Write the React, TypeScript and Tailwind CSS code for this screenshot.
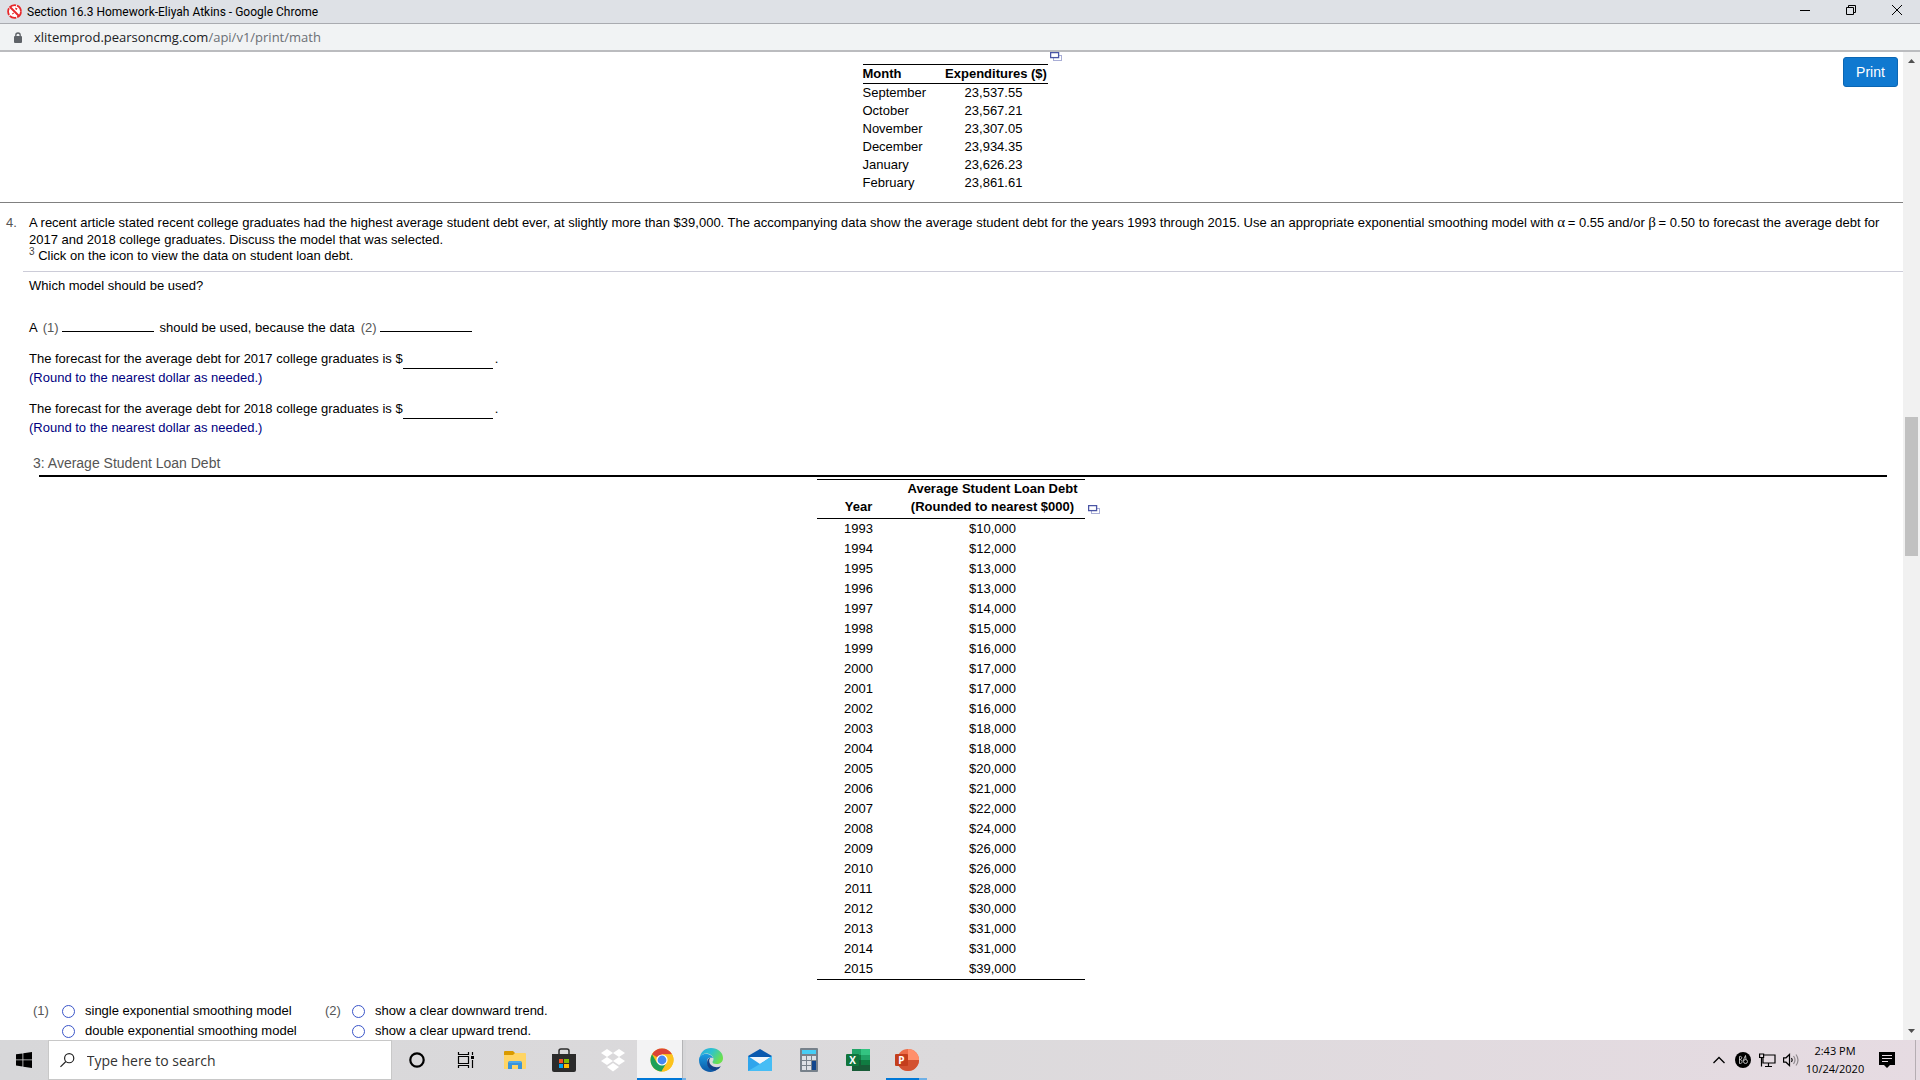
import React from 'react';

const expenditures = [
  { month: 'September', amount: '23,537.55' },
  { month: 'October', amount: '23,567.21' },
  { month: 'November', amount: '23,307.05' },
  { month: 'December', amount: '23,934.35' },
  { month: 'January', amount: '23,626.23' },
  { month: 'February', amount: '23,861.61' },
];

const loanDebt = [
  { year: 1993, debt: '$10,000' },
  { year: 1994, debt: '$12,000' },
  { year: 1995, debt: '$13,000' },
  { year: 1996, debt: '$13,000' },
  { year: 1997, debt: '$14,000' },
  { year: 1998, debt: '$15,000' },
  { year: 1999, debt: '$16,000' },
  { year: 2000, debt: '$17,000' },
  { year: 2001, debt: '$17,000' },
  { year: 2002, debt: '$16,000' },
  { year: 2003, debt: '$18,000' },
  { year: 2004, debt: '$18,000' },
  { year: 2005, debt: '$20,000' },
  { year: 2006, debt: '$21,000' },
  { year: 2007, debt: '$22,000' },
  { year: 2008, debt: '$24,000' },
  { year: 2009, debt: '$26,000' },
  { year: 2010, debt: '$26,000' },
  { year: 2011, debt: '$28,000' },
  { year: 2012, debt: '$30,000' },
  { year: 2013, debt: '$31,000' },
  { year: 2014, debt: '$31,000' },
  { year: 2015, debt: '$39,000' },
];

const PopupIcon = () => (
  <svg width="12" height="10" viewBox="0 0 12 10" fill="none">
    <rect x="3.5" y="3.5" width="8" height="5" stroke="#a9aed6" />
    <rect x="0.6" y="0.6" width="8" height="5" fill="#fff" stroke="#4a55a5" strokeWidth="1.3" />
  </svg>
);

const TitleBar = () => (
  <header className="flex h-6 shrink-0 items-center border-b border-[#a9abb0] bg-[#dee1e6] pl-[7px] font-['Roboto',sans-serif] text-[12px] text-black">
    <svg width="15" height="15" viewBox="0 0 15 15" fill="none">
      <circle cx="7.5" cy="7.5" r="6.4" fill="#fff" stroke="#e8282b" strokeWidth="1.8" strokeDasharray="7 1" />
      <path d="M3 3l9 9" stroke="#e8282b" strokeWidth="2" />
      <path d="M5 10l2-1M8 4l2 1M9 6l1-2" stroke="#e8282b" />
    </svg>
    <h1 className="ml-[5px] flex-1">Section 16.3 Homework-Eliyah Atkins - Google Chrome</h1>
    <div className="flex h-full items-center pb-[3px]">
      <button aria-label="Minimize" className="flex w-[46px] justify-center">
        <svg width="10" height="10" viewBox="0 0 10 10"><path d="M0 5.5h10" stroke="#000" /></svg>
      </button>
      <button aria-label="Restore" className="flex w-[46px] justify-center">
        <svg width="10" height="10" viewBox="0 0 10 10" fill="none" stroke="#000">
          <path d="M0.5 2.5h7v7h-7zM2.5 2.5v-2h7v7h-2" />
        </svg>
      </button>
      <button aria-label="Close" className="flex w-[46px] justify-center">
        <svg width="10" height="10" viewBox="0 0 10 10"><path d="M0 0l10 10M10 0L0 10" stroke="#000" /></svg>
      </button>
    </div>
  </header>
);

const AddressBar = () => (
  <div className="flex h-7 shrink-0 items-center border-b-2 border-[#bbbcbf] bg-[#f1f3f4] pt-px pl-[14px] font-['Open_Sans',sans-serif] text-[13px] text-[#202124]">
    <svg width="8" height="12" viewBox="0 0 8 12">
      <path d="M1.8 5V3.2a2.2 2.2 0 0 1 4.4 0V5" fill="none" stroke="#5f6368" strokeWidth="1.3" />
      <rect y="4" width="8" height="7" rx="1" fill="#5f6368" />
    </svg>
    <p className="ml-3">
      xlitemprod.pearsoncmg.com<span className="text-[#6b6f74]">/api/v1/print/math</span>
    </p>
  </div>
);

const ExpendituresTable = () => (
  <div className="flex justify-center gap-[2px] pl-[21px]">
    <table className="mt-3 w-[185px] border-collapse leading-[18px]">
      <thead>
        <tr className="border-y border-black">
          <th className="p-0 text-left">Month</th>
          <th className="w-[103px] p-0 text-center whitespace-nowrap">Expenditures ($)</th>
        </tr>
      </thead>
      <tbody>
        {expenditures.map(row => (
          <tr key={row.month}>
            <td className="p-0">{row.month}</td>
            <td className="p-0 pr-[5px] text-center">{row.amount}</td>
          </tr>
        ))}
      </tbody>
    </table>
    <button aria-label="Copy table data" className="self-start"><PopupIcon /></button>
  </div>
);

interface ForecastProps {
  year: number;
}

const Forecast: React.FC<ForecastProps> = ({ year }) => (
  <div className="mb-3 leading-[19px]">
    <div className="flex">
      <label htmlFor={`forecast-${year}`}>
        The forecast for the average debt for {year} college graduates is $
      </label>
      <input
        id={`forecast-${year}`}
        className="h-5 w-[90px] border-b border-black outline-none"
      />
      <span className="ml-[2px]">.</span>
    </div>
    <p className="-mt-px text-[#000080]">(Round to the nearest dollar as needed.)</p>
  </div>
);

const LoanDebtTable = () => (
  <div className="flex justify-center gap-[3px] pr-[10px]">
    <table className="mt-[2px] w-[268px] border-collapse border-y border-black text-center leading-5">
      <thead className="border-b border-black leading-[18px]">
        <tr>
          <th className="w-[84px] p-0 pb-[2px] align-bottom">Year</th>
          <th className="p-0 pb-[2px] whitespace-nowrap">
            Average Student Loan Debt
            <br />
            (Rounded to nearest $000)
          </th>
        </tr>
      </thead>
      <tbody>
        {loanDebt.map(row => (
          <tr key={row.year}>
            <td className="p-0">{row.year}</td>
            <td className="p-0">{row.debt}</td>
          </tr>
        ))}
      </tbody>
    </table>
    <button aria-label="Copy table data" className="mt-7 self-start"><PopupIcon /></button>
  </div>
);

interface ChoiceProps {
  name: string;
  label: string;
}

const Choice: React.FC<ChoiceProps> = ({ name, label }) => (
  <label className="flex items-center gap-[10px]">
    <input
      type="radio"
      name={name}
      className="h-[13px] w-[13px] appearance-none rounded-full border border-[#3a55c9]"
    />
    {label}
  </label>
);

const Worksheet = () => (
  <main className="flex-1 overflow-hidden font-['Liberation_Sans',Arial,sans-serif] text-[13px] text-black">
    <section className="relative border-b border-[#808080] pb-[10px]">
      <ExpendituresTable />
      <button className="absolute top-[5px] right-[5px] h-[30px] w-[55px] rounded-[3px] border border-[#0b66b3] bg-[#1079d0] text-[14px] text-white">
        Print
      </button>
    </section>

    <section className="flex pt-[11px]">
      <span className="w-[23px] pl-[6px] leading-[17px] text-[#555]">4.</span>
      <div className="flex-1">
        <div className="border-b border-[#ccccd8] pb-[7px] pl-[6px] leading-[17px]">
          <p>
            A recent article stated recent college graduates had the highest average student debt ever, at slightly more
            than $39,000. The accompanying data show the average student debt for the years 1993 through 2015. Use an
            appropriate exponential smoothing model with{' '}
            <span className="font-['Liberation_Serif',serif] text-[15px] leading-none">α</span>&thinsp;= 0.55 and/or{' '}
            <span className="font-['Liberation_Serif',serif] text-[15px] leading-none">β</span>&thinsp;= 0.50 to forecast
            the average debt for 2017 and 2018 college graduates. Discuss the model that was selected.
          </p>
          <p className="leading-4">
            <sup className="text-[10px] text-[#444]">3</sup> Click on the icon to view the data on student loan debt.
          </p>
        </div>
        <div className="pl-[6px]">
          <p className="pt-1 leading-[19px]">Which model should be used?</p>
          <div className="mt-[23px] mb-3 flex leading-[19px]">
            <span>A</span>
            <label htmlFor="blank-1" className="ml-[5px] text-[#555]">(1)</label>
            <input id="blank-1" className="ml-[3px] h-[14px] w-[92px] border-b border-black outline-none" />
            <span className="ml-[6px]">should be used, because the data</span>
            <label htmlFor="blank-2" className="ml-[6px] text-[#555]">(2)</label>
            <input id="blank-2" className="ml-[3px] h-[14px] w-[92px] border-b border-black outline-none" />
          </div>
          <Forecast year={2017} />
          <Forecast year={2018} />
        </div>
      </div>
    </section>

    <section className="pr-4 pl-[33px]">
      <h2 className="pt-1 pb-[2px] text-[14px] leading-5 text-[#555]">3: Average Student Loan Debt</h2>
      <div className="ml-[6px] border-t-2 border-black">
        <LoanDebtTable />
      </div>
      <div className="mt-[21px] flex leading-5">
        <span className="w-[29px] text-[#555]">(1)</span>
        <div className="w-[263px]">
          <Choice name="model" label="single exponential smoothing model" />
          <Choice name="model" label="double exponential smoothing model" />
        </div>
        <span className="w-[27px] text-[#555]">(2)</span>
        <div>
          <Choice name="trend" label="show a clear downward trend." />
          <Choice name="trend" label="show a clear upward trend." />
        </div>
      </div>
    </section>
  </main>
);

const ScrollBar = () => (
  <div className="flex w-[17px] shrink-0 flex-col items-center bg-[#f1f1f1]">
    <svg width="17" height="17" viewBox="0 0 17 17"><path d="M5 11l3.5-4 3.5 4z" fill="#505050" /></svg>
    <div className="flex w-full flex-1 flex-col px-[2px]">
      <div className="basis-[36.5%]" />
      <div className="basis-[14.5%] bg-[#c1c1c1]" />
    </div>
    <svg width="17" height="17" viewBox="0 0 17 17"><path d="M5 6l3.5 4L12 6z" fill="#505050" /></svg>
  </div>
);

const CortanaIcon = () => (
  <svg width="18" height="18" viewBox="0 0 18 18"><circle cx="9" cy="9" r="6.7" fill="none" stroke="#000" strokeWidth="2.2" /></svg>
);

const TaskViewIcon = () => (
  <svg width="18" height="18" viewBox="0 0 18 18" fill="none" stroke="#000" strokeWidth="1.2">
    <path d="M1.5 1v2.5h10V1M1.5 17v-2.5h10V17M1.5 5.5h10v7h-10zM15.5 1v3M15.5 9v8" />
    <path d="M14 5h3v3h-3z" fill="#000" stroke="none" />
  </svg>
);

const ExplorerIcon = () => (
  <svg width="22" height="18" viewBox="0 0 22 18">
    <path d="M0 1a1 1 0 0 1 1-1h8l2 2v3H0z" fill="#d99a00" />
    <path d="M0 4h9l2-2h10a1 1 0 0 1 1 1v14a1 1 0 0 1-1 1H0z" fill="#ffd565" />
    <path d="M4 18v-6a2 2 0 0 1 2-2h10a2 2 0 0 1 2 2v6h-4v-4H8v4z" fill="#3a94da" />
    <path d="M5 10h12v2H5z" fill="#50a9e8" />
  </svg>
);

const StoreIcon = () => (
  <svg width="24" height="24" viewBox="0 0 24 24">
    <path d="M7 7V3a2 2 0 0 1 2-2h6a2 2 0 0 1 2 2v4" fill="none" stroke="#2d2d2d" strokeWidth="1.5" />
    <path d="M0 6h24v16a2 2 0 0 1-2 2H2a2 2 0 0 1-2-2z" fill="#2b2b2b" />
    <path d="M7 11h4v4H7z" fill="#f25022" />
    <path d="M12 11h5v4h-5z" fill="#7fba00" />
    <path d="M7 16h4v4H7z" fill="#00a4ef" />
    <path d="M12 16h5v4h-5z" fill="#ffb900" />
  </svg>
);

const DropboxIcon = () => (
  <svg width="24" height="23" viewBox="0 0 24 23" fill="#fff">
    <path d="M6 0l6 4-6 4-6-4zM18 0l6 4-6 4-6-4zM6 8l6 4-6 4-6-4zM18 8l6 4-6 4-6-4zM6 18l6-4 6 4-6 4.5z" />
  </svg>
);

const ChromeIcon = () => (
  <svg width="24" height="24" viewBox="0 0 24 24">
    <circle cx="12" cy="12" r="11.5" fill="#fbc116" />
    <path d="M12 12L2.04 6.25A11.5 11.5 0 0 1 21.96 6.25H12z" fill="#dc4437" />
    <path d="M2.04 6.25A11.5 11.5 0 0 0 11.5 23.5L17 15l-5-3-5 3z" fill="#1da05a" />
    <path d="M12 6.5h10.1A11.5 11.5 0 0 1 11.5 23.5L17 14z" fill="#fcc31e" />
    <circle cx="12" cy="12" r="5.6" fill="#fff" />
    <circle cx="12" cy="12" r="4.4" fill="#4688f1" />
  </svg>
);

const EdgeIcon = () => (
  <svg width="24" height="24" viewBox="0 0 24 24">
    <defs>
      <linearGradient id="edge-top" x1="0" y1="0" x2="1" y2="0.5">
        <stop offset="0" stopColor="#2aa9e0" />
        <stop offset="0.5" stopColor="#2ec2cf" />
        <stop offset="1" stopColor="#6be04e" />
      </linearGradient>
      <linearGradient id="edge-side" x1="0" y1="0" x2="0" y2="1">
        <stop offset="0" stopColor="#1b9de2" />
        <stop offset="1" stopColor="#0c56a4" />
      </linearGradient>
    </defs>
    <path d="M0.5 10.5C1.5 4 6 0 12 0c7 0 12 4.5 12 10 0 4-3 6-6.5 6-3 0-4-1-4-2 0-.8 1-1 1-3C14.5 8 11 5.500 7.500 5.500c-3.500 0-6 2-7 5z" fill="url(#edge-top)" />
    <path d="M0 12c0-3.500 3-6 6.800-6 3.700 0 6.500 2 7.200 4-5-2-7 2-5.500 6 1.500 4 6 6.500 9.500 5.500-1.800 1.600-4 2.500-6.500 2.500C5 24 0 19 0 12z" fill="url(#edge-side)" />
    <path d="M8.300 13C7 18 11 23 16.500 22.500c2-.7 4-2.300 5.300-4.300-5 2.300-11 .3-11.600-5.200-.1-1.500.5-2.600 1.500-3.500C10 10 8.800 11 8.300 13z" fill="#133f86" />
  </svg>
);

const MailIcon = () => (
  <svg width="24" height="22" viewBox="0 0 24 22">
    <path d="M0 7l12-7 12 7v3H0z" fill="#0a59ae" />
    <path d="M2 8h20v4l-10 4L2 12z" fill="#f2f6fa" />
    <path d="M0 7l12 8 12-8v15H0z" fill="#2fa5ec" />
    <path d="M0 22l12-7L24 7v15z" fill="#46bdf5" />
  </svg>
);

const CalculatorIcon = () => (
  <svg width="18" height="24" viewBox="0 0 18 24">
    <rect width="18" height="24" rx="1" fill="#77818b" />
    <path d="M2 2h14v4H2z" fill="#46cdf5" />
    <path d="M2 8h4v4H2zM7 8h4v4H7zM12 8h4v4h-4zM2 13h4v4H2zM7 13h4v4H7zM2 18h4v4H2zM7 18h4v4H7z" fill="#dde1e6" />
    <path d="M12 13h4v9h-4z" fill="#12468d" />
  </svg>
);

const ExcelIcon = () => (
  <svg width="24" height="22" viewBox="0 0 24 22">
    <path d="M6 0h9v6H6z" fill="#21a366" />
    <path d="M15 0h9v6h-9z" fill="#33c481" />
    <path d="M6 6h9v5H6z" fill="#107c41" />
    <path d="M15 6h9v5h-9z" fill="#21a366" />
    <path d="M6 11h18v11H6z" fill="#185c37" />
    <path d="M15 11h9v5h-9z" fill="#107c41" />
    <rect y="5" width="13" height="12" rx="1" fill="#10753d" />
    <text x="6.5" y="14.5" textAnchor="middle" fill="#fff" fontFamily="Open Sans, sans-serif" fontSize="10" fontWeight="700">X</text>
  </svg>
);

const PowerPointIcon = () => (
  <svg width="24" height="22" viewBox="0 0 24 22">
    <circle cx="13" cy="11" r="11" fill="#ed6c47" />
    <path d="M13 0a11 11 0 0 1 11 11H13z" fill="#ff8f6b" />
    <path d="M2 11h22a11 11 0 0 1-22 0z" fill="#d35230" />
    <rect y="5" width="13" height="12" rx="1" fill="#c43e1c" />
    <text x="6.5" y="14.5" textAnchor="middle" fill="#fff" fontFamily="Open Sans, sans-serif" fontSize="10" fontWeight="700">P</text>
  </svg>
);

const apps = [
  { name: 'Cortana', icon: <CortanaIcon /> },
  { name: 'Task View', icon: <TaskViewIcon /> },
  { name: 'File Explorer', icon: <ExplorerIcon /> },
  { name: 'Microsoft Store', icon: <StoreIcon /> },
  { name: 'Dropbox', icon: <DropboxIcon /> },
  { name: 'Google Chrome', icon: <ChromeIcon />, state: 'active' },
  { name: 'Microsoft Edge', icon: <EdgeIcon /> },
  { name: 'Mail', icon: <MailIcon /> },
  { name: 'Calculator', icon: <CalculatorIcon /> },
  { name: 'Excel', icon: <ExcelIcon /> },
  { name: 'PowerPoint', icon: <PowerPointIcon />, state: 'open' },
];

const Taskbar = () => (
  <footer className="flex h-10 shrink-0 bg-linear-to-r from-[#d7d7d9] via-[#dcdadc] to-[#e6dbe2] font-['Open_Sans',sans-serif] text-black">
    <button aria-label="Start" className="flex w-12 items-center justify-center">
      <svg width="16" height="16" viewBox="0 0 16 16">
        <path d="M0 2.3l6.5-.9v6.1H0zM7.3 1.3L16 0v7.5H7.3zM0 8.3h6.5v6.200L0 13.6zM7.3 8.3H16V16l-8.700-1.300z" />
      </svg>
    </button>
    <label className="flex w-[344px] items-center border border-[#c8c8c8] bg-white pl-[11px]">
      <svg width="16" height="16" viewBox="0 0 16 16" fill="none" stroke="#222" strokeWidth="1.3">
        <circle cx="10" cy="6" r="5" />
        <path d="M6.4 9.6L0.5 15.5" />
      </svg>
      <input
        type="text"
        aria-label="Search"
        placeholder="Type here to search"
        className="ml-3 w-full text-[14px] outline-none placeholder:text-[#333]"
      />
    </label>
    {apps.map(app => (
      <button
        key={app.name}
        aria-label={app.name}
        className={`relative flex w-[49px] items-center justify-center ${
          app.state === 'active' ? 'bg-[#f3f3f4]' : ''
        }`}
      >
        {app.icon}
        {app.state === 'active' && (
          <>
            <span className="absolute inset-y-0 right-0 w-1 border-l border-[#b4b4b6] bg-[#d6d6d8]" />
            <span className="absolute inset-x-0 bottom-0 h-[2px] border-r-4 border-[#6fb0e6] bg-[#0078d7]" />
          </>
        )}
        {app.state === 'open' && (
          <span className="absolute inset-x-1 bottom-0 h-[2px] border-r-8 border-[#6fb0e6] bg-[#0078d7]" />
        )}
      </button>
    ))}
    <div className="ml-auto flex items-center">
      <button aria-label="Show hidden icons" className="flex w-6 justify-center">
        <svg width="12" height="8" viewBox="0 0 12 8"><path d="M0.5 7L6 1.5 11.5 7" fill="none" stroke="#000" strokeWidth="1.3" /></svg>
      </button>
      <button aria-label="Audio manager" className="flex w-6 justify-center">
        <svg width="16" height="16" viewBox="0 0 16 16">
          <circle cx="8" cy="8" r="8" fill="#000" />
          <path d="M4.5 4.5v7M4.5 4.5c3-.8 3 3 0 3 3.500 0 3.500 4.500 0 4M8 9L10.500 3.500 11 7.500M8.500 9.500a2 2 0 1 0 4 0 2 2 0 1 0-4 0" fill="none" stroke="#ddd" strokeWidth="0.8" />
        </svg>
      </button>
      <button aria-label="Network" className="flex w-6 justify-center">
        <svg width="17" height="15" viewBox="0 0 17 15" fill="none" stroke="#000" strokeWidth="1.2">
          <path d="M5 2h11v8H4V5M9.5 10v3M6 13.5h7M0.6 1h4v3.5h-4zM2.5 5v8.5" />
        </svg>
      </button>
      <button aria-label="Volume" className="flex w-6 justify-center">
        <svg width="16" height="14" viewBox="0 0 16 14" fill="none" stroke="#000" strokeWidth="1.2">
          <path d="M0.6 4.8H3L6.5 1.5v11L3 9.200H0.6z" />
          <path d="M8.5 5q1.5 2 0 4" />
          <path d="M10.5 3q3 4 0 8M13 1.5q4 5.500 0 11" stroke="#8f898d" />
        </svg>
      </button>
      <div className="w-16 text-center text-[11px] leading-[18px]">
        <p>2:43 PM</p>
        <p>10/24/2020</p>
      </div>
      <button aria-label="Notifications" className="ml-3 flex w-4 justify-center">
        <svg width="16" height="16" viewBox="0 0 16 16">
          <path d="M0 0h16v13h-5l-3 3-3-3H0z" />
          <path d="M3 3.5h10M3 6.5h10M3 9.5h6" stroke="#e6dbe2" />
        </svg>
      </button>
      <div className="ml-5 h-10 w-[5px] border-l border-[#b5adb2]" />
    </div>
  </footer>
);

const App = () => (
  <div className="flex h-screen flex-col overflow-hidden bg-white">
    <TitleBar />
    <AddressBar />
    <div className="flex min-h-0 flex-1">
      <Worksheet />
      <ScrollBar />
    </div>
    <Taskbar />
  </div>
);

export default App;
